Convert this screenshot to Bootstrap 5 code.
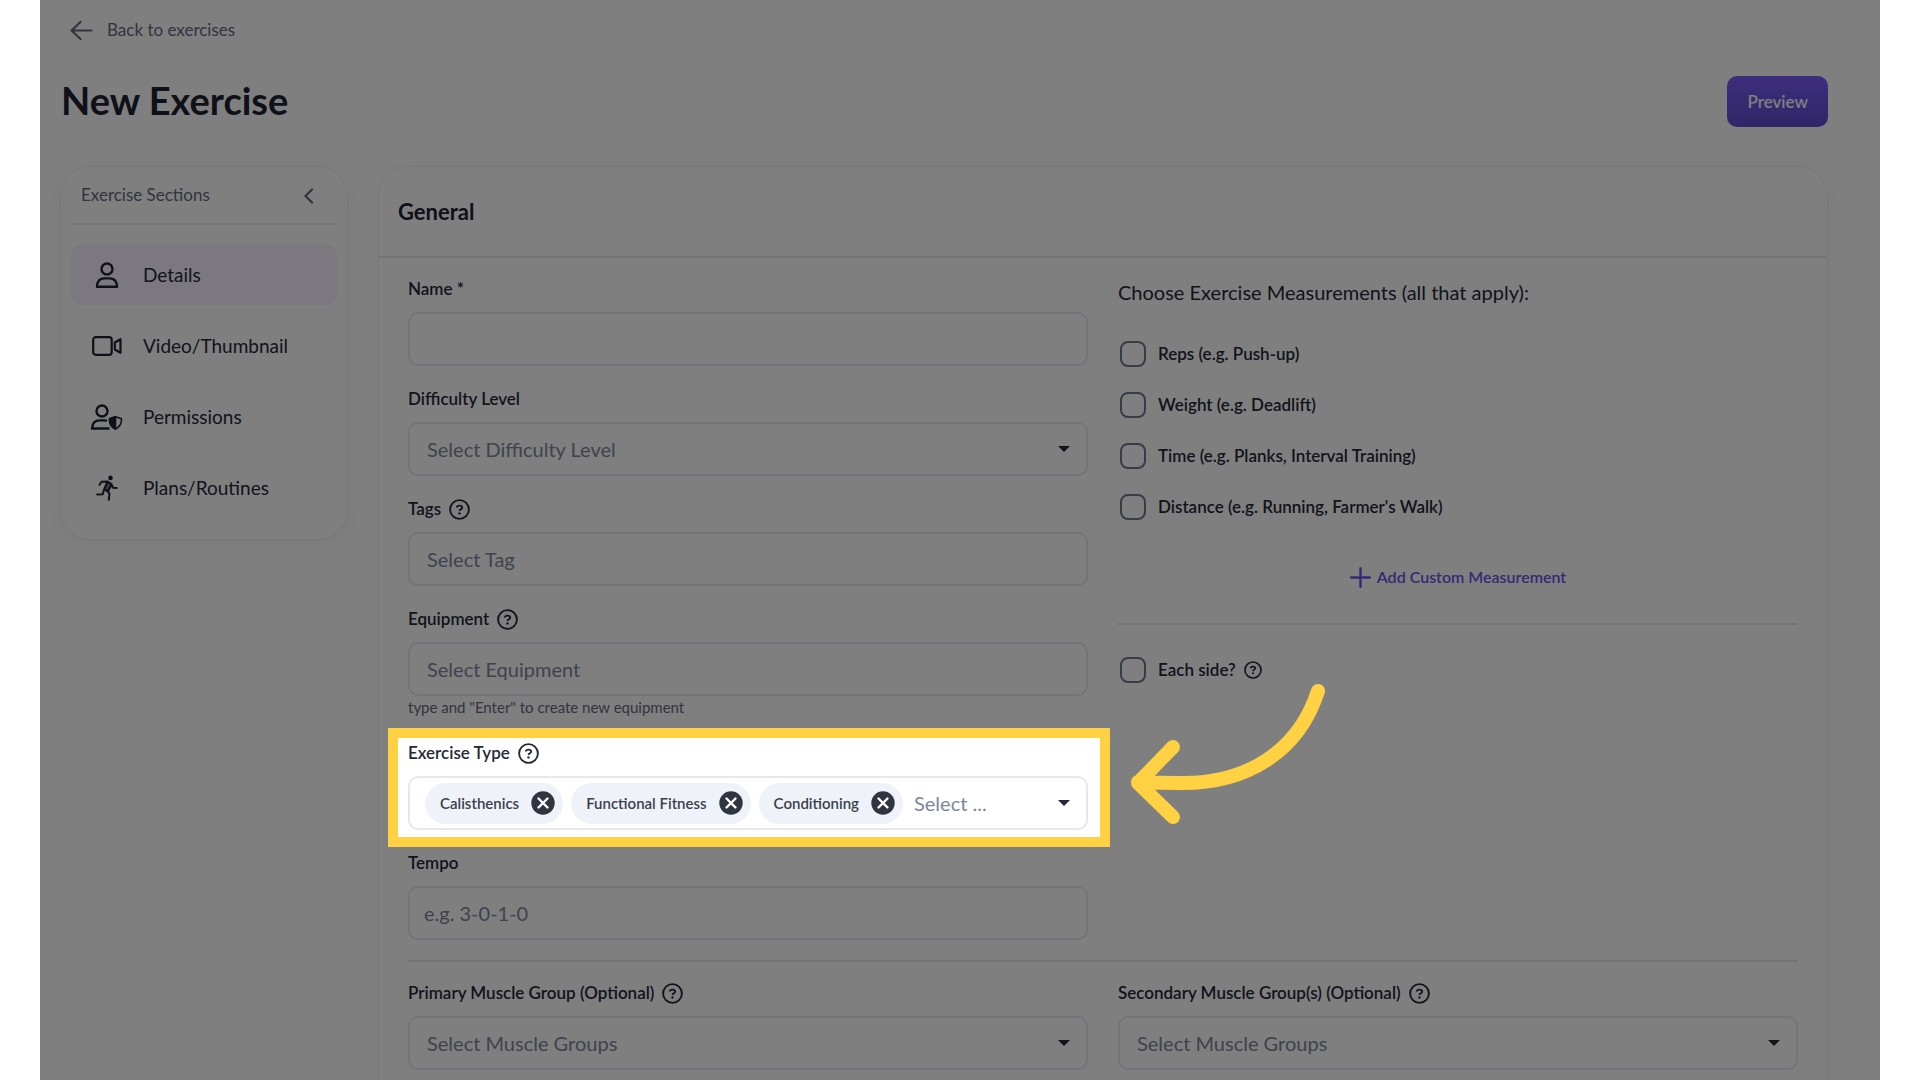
<!DOCTYPE html>
<html lang="en">
<head>
<meta charset="utf-8">
<meta name="viewport" content="width=device-width, initial-scale=1">
<title>New Exercise</title>
<link href="https://cdn.jsdelivr.net/npm/bootstrap@5.3.0/dist/css/bootstrap.min.css" rel="stylesheet">
<style>
  :root {
    --ink: #242938;
    --ink-strong: #1e2233;
    --muted: #626a7d;
    --placeholder: #7c869b;
    --line: #e6e8ee;
    --accent: #6c52e8;
    --spot: #ffd143;
  }
  body { font-family: Lato, "Liberation Sans", sans-serif; color: var(--ink); background: #fff; font-size: 20px; line-height: 24px; }
  .app-shell { position: relative; height: 100vh; overflow: hidden; margin: 0 40px; padding: 18px 52px 0 20px; }
  .back-link { color: var(--muted); font-size: 17px; gap: 14px; margin-left: 10px; }
  .title-bar { margin-top: 34px; height: 51px; }
  .page-title { font-size: 38px; line-height: 46px; font-weight: 700; color: var(--ink-strong); padding: 0 0 4px 1px; }
  .preview-btn { height: 51px; padding: 0 20px; border: 0; border-radius: 10px; color: #fff; font-size: 17px; font-weight: 600; background: linear-gradient(#785cfb, #624cd0); }
  .preview-btn:hover { color: #fff; background: #624cd0; }
  .board { margin-top: 39px; gap: 30px; }
  .panel { background: #fff; border: 1px solid #eeeff3; border-radius: 30px; box-shadow: 0 4px 24px rgba(40, 40, 60, .04); }

  .side-panel { flex: 0 0 288px; padding: 0 10px 21px; }
  .side-head { height: 58px; padding: 0 15px 0 10px; border-bottom: 2px solid var(--line); color: var(--muted); font-size: 17px; margin-bottom: 20px; }
  .side-list { gap: 11px; }
  .side-list .nav-link { height: 60px; padding: 0 0 0 12px; border-radius: 10px; color: var(--ink); gap: 13px; font-size: 19px; }
  .side-list .nav-link.active { background: #f6f2ff; }
  .side-list .ico-slot { width: 47px; flex: none; }

  .main-head { height: 91px; padding: 0 19px; border-bottom: 2px solid var(--line); }
  .main-head h2 { font-size: 22px; line-height: 28px; font-weight: 700; color: var(--ink-strong); }
  .main-body { padding: 20px 29px 60px; }
  .main-body .row { --bs-gutter-x: 30px; }

  .field { position: relative; margin-bottom: 22px; }
  .field-label { font-size: 17px; line-height: 22px; font-weight: 600; margin-bottom: 12px; gap: 8px; }
  .box { height: 54px; padding: 0 17px; border: 2px solid var(--line); border-radius: 10px; font-size: 20px; color: var(--placeholder); background-color: #fff; }
  .box.narrow-pad { padding: 0 14px; }
  .box::placeholder { color: var(--placeholder); opacity: 1; }
  .caret { background-image: url("data:image/svg+xml,%3Csvg xmlns='http://www.w3.org/2000/svg' viewBox='0 0 12 6'%3E%3Cpath d='M0 0h12L6 6z' fill='%23242938'/%3E%3C/svg%3E"); background-repeat: no-repeat; background-size: 12px 6px; background-position: right 16px center; }
  .hint { font-size: 15px; line-height: 22px; padding-bottom: 2px; color: var(--muted); }
  .rule { height: 2px; margin: 0; border: 0; background: var(--line); opacity: 1; }

  .chips { gap: 8px; padding: 0 0 0 15px; }
  .chip-item { height: 41px; padding: 0 8px 0 15px; gap: 12px; border-radius: 21px; background: #eff3f9; font-size: 15px; font-weight: 600; color: #3a3f4c; }
  .chip-x { padding: 0; border: 0; background: none; line-height: 0; }
  .chip-select { align-self: stretch; border: 0; padding: 0 0 0 3px; appearance: none; background-color: transparent; color: var(--placeholder); border-radius: 10px; }

  /* Tour step: frames one field and dims everything else in the shell */
  .spotlight { position: absolute; top: -14px; right: -22px; bottom: -17px; left: -20px; border: 10px solid var(--spot); box-shadow: 0 0 0 3000px rgba(0, 0, 0, .5); z-index: 10; pointer-events: none; }
  .spotlight svg { position: absolute; top: -56px; left: calc(100% + 30px); }

  .measure-title { font-size: 20px; line-height: 28px; font-weight: 400; margin-bottom: 35px; }
  .checks { gap: 25px; }
  .check-line { min-height: 26px; padding: 0 0 0 2px; margin: 0; gap: 12px; font-size: 17px; font-weight: 600; line-height: 26px; }
  .check-line .form-check-input { width: 26px; height: 26px; margin: 0; float: none; border: 2px solid #6d7a91; border-radius: 8px; flex: none; }
  .add-link { color: var(--accent); font-size: 16px; font-weight: 600; gap: 6px; margin: 45px 0 34px; }
  .each-side { margin-top: 32px; }
  .muscles-rule { margin-top: 20px; }
  .muscles { margin-top: 20px; }
  svg { flex: none; }
</style>
</head>
<body>
<svg class="d-none" aria-hidden="true">
  <symbol id="help" viewBox="0 0 21 21"><circle cx="10.500" cy="10.500" r="9.400" fill="none" stroke="currentColor" stroke-width="1.900"/><path d="M7.800 8.500Q8 6.600 10.500 6.600T13.200 8.600Q13.200 9.800 11.700 10.300Q10.600 10.700 10.600 12" fill="none" stroke="currentColor" stroke-width="1.900"/><circle cx="10.500" cy="14.400" r="1.200" fill="currentColor"/></symbol>
  <symbol id="close" viewBox="0 0 24 24"><circle cx="12" cy="12" r="11.700" fill="#30353f"/><path d="M7.500 7.500l9 9m0-9l-9 9" stroke="#fff" stroke-width="2.400" stroke-linecap="round"/></symbol>
</svg>

<div class="app-shell">
  <div class="d-flex">
    <a href="#" class="back-link d-flex align-items-center text-decoration-none">
      <svg width="23" height="20" viewBox="0 0 23 20" fill="none" stroke="currentColor" stroke-width="2.200" stroke-linecap="round" stroke-linejoin="round" aria-hidden="true"><path d="M21.500 10.500H1.500M10.500 2L1.500 10.500L10.500 19"/></svg>
      Back to exercises
    </a>
  </div>
  <div class="title-bar d-flex justify-content-between align-items-center">
    <h1 class="page-title m-0">New Exercise</h1>
    <button type="button" class="btn preview-btn">Preview</button>
  </div>

  <div class="board d-flex align-items-start">
    <aside class="panel side-panel">
      <div class="side-head d-flex justify-content-between align-items-center">
        <span>Exercise Sections</span>
        <button type="button" class="btn px-2 py-0 border-0 lh-1" aria-label="Collapse sections">
          <svg width="10" height="16" viewBox="0 0 10 16" fill="none" stroke="#626a7d" stroke-width="2.200" stroke-linecap="round" stroke-linejoin="round"><path d="M8 1.500L1.500 8L8 14.500"/></svg>
        </button>
      </div>
      <nav class="nav flex-column side-list">
        <a href="#" class="nav-link active d-flex align-items-center">
          <span class="ico-slot d-flex justify-content-center"><svg width="24" height="26" viewBox="0 0 24 26" fill="none" stroke="#1e2233" stroke-width="2.400" stroke-linejoin="round"><circle cx="12" cy="7" r="5.500"/><path d="M2 24.700Q2.300 16.400 9.500 16.400H14.500Q21.700 16.400 22 24.700Z"/></svg></span>
          Details
        </a>
        <a href="#" class="nav-link d-flex align-items-center">
          <span class="ico-slot d-flex justify-content-center"><svg width="30" height="20" viewBox="0 0 30 20" fill="none" stroke="#1e2233" stroke-width="2.200" stroke-linejoin="round"><rect x="1.200" y="1.200" width="18.500" height="17.600" rx="2.500"/><path d="M28.500 3.200V16.800L22.800 13.500V6.500Z"/></svg></span>
          Video/Thumbnail
        </a>
        <a href="#" class="nav-link d-flex align-items-center">
          <span class="ico-slot d-flex justify-content-center"><svg width="33" height="26" viewBox="0 0 33 26" fill="none" stroke="#1e2233" stroke-width="2.400" stroke-linejoin="round"><circle cx="12" cy="7" r="5.500"/><path d="M17 16.700Q15.500 16.400 14 16.400H9.500Q2.500 16.400 2 24.500H19.500"/><path d="M25.500 12.700L31.500 14.800Q31.900 22 25.500 25Q19.100 22 19.500 14.800Z" stroke-width="1.600"/><path d="M25.500 12.700L19.500 14.800Q19.100 22 25.500 25Z" fill="#1e2233" stroke-width="1.600"/></svg></span>
          Permissions
        </a>
        <a href="#" class="nav-link d-flex align-items-center">
          <span class="ico-slot d-flex justify-content-center"><svg width="22" height="26" viewBox="0 0 22 26" fill="none" stroke="#1e2233" stroke-width="2" stroke-linecap="round" stroke-linejoin="round"><circle cx="14.500" cy="2.900" r="2.300" fill="#1e2233" stroke="none"/><path d="M3.500 9.800L5.500 6.800L11.500 6.600L15.500 9.200L17 12.800L20.800 13M11.500 6.600L8.500 13.500L13.500 18.500L12.800 24.800M15.500 9.200L12.500 15.500M8.200 14L6.700 19.200L1.200 19.400"/><path d="M11.500 7L15.500 9.500L12.500 16L9 14Z" fill="#1e2233" fill-opacity=".6" stroke="none"/></svg></span>
          Plans/Routines
        </a>
      </nav>
    </aside>

    <main class="panel flex-grow-1">
      <header class="main-head d-flex align-items-center"><h2 class="m-0">General</h2></header>
      <form class="main-body">
        <div class="row">
          <div class="col-6">
            <div class="field">
              <label class="field-label d-flex align-items-center" for="name">Name *</label>
              <input id="name" type="text" class="form-control box">
            </div>
            <div class="field">
              <label class="field-label d-flex align-items-center" for="level">Difficulty Level</label>
              <select id="level" class="form-select box caret"><option>Select Difficulty Level</option></select>
            </div>
            <div class="field">
              <label class="field-label d-flex align-items-center" for="tags">Tags <svg width="21" height="21"><use href="#help"/></svg></label>
              <input id="tags" type="text" class="form-control box" placeholder="Select Tag">
            </div>
            <div class="field">
              <label class="field-label d-flex align-items-center" for="equipment">Equipment <svg width="21" height="21"><use href="#help"/></svg></label>
              <input id="equipment" type="text" class="form-control box" placeholder="Select Equipment">
              <div class="hint">type and "Enter" to create new equipment</div>
            </div>
            <div class="field">
              <label class="field-label d-flex align-items-center" for="type">Exercise Type <svg width="21" height="21"><use href="#help"/></svg></label>
              <div class="box chips d-flex align-items-center">
                <span class="chip-item d-flex align-items-center">Calisthenics <button type="button" class="chip-x" aria-label="Remove Calisthenics"><svg width="24" height="24"><use href="#close"/></svg></button></span>
                <span class="chip-item d-flex align-items-center">Functional Fitness <button type="button" class="chip-x" aria-label="Remove Functional Fitness"><svg width="24" height="24"><use href="#close"/></svg></button></span>
                <span class="chip-item d-flex align-items-center">Conditioning <button type="button" class="chip-x" aria-label="Remove Conditioning"><svg width="24" height="24"><use href="#close"/></svg></button></span>
                <select id="type" class="chip-select caret flex-grow-1"><option>Select ...</option></select>
              </div>
              <div class="spotlight">
                <svg width="198" height="144" viewBox="1130 682 198 144" fill="none" stroke="#ffd143" stroke-width="14" stroke-linecap="round" stroke-linejoin="round" aria-hidden="true"><path d="M1318 691C1298 753 1245 784 1180 783Q1160 783 1138 782M1173 747L1138 783L1173 817"/></svg>
              </div>
            </div>
            <div class="field mb-0">
              <label class="field-label d-flex align-items-center" for="tempo">Tempo</label>
              <input id="tempo" type="text" class="form-control box narrow-pad" placeholder="e.g. 3-0-1-0">
            </div>
          </div>

          <div class="col-6">
            <h3 class="measure-title">Choose Exercise Measurements (all that apply):</h3>
            <div class="checks d-flex flex-column">
              <div class="check-line d-flex align-items-center"><input class="form-check-input" type="checkbox" id="reps"><label for="reps">Reps (e.g. Push-up)</label></div>
              <div class="check-line d-flex align-items-center"><input class="form-check-input" type="checkbox" id="weight"><label for="weight">Weight (e.g. Deadlift)</label></div>
              <div class="check-line d-flex align-items-center"><input class="form-check-input" type="checkbox" id="time"><label for="time">Time (e.g. Planks, Interval Training)</label></div>
              <div class="check-line d-flex align-items-center"><input class="form-check-input" type="checkbox" id="distance"><label for="distance">Distance (e.g. Running, Farmer's Walk)</label></div>
            </div>
            <div class="d-flex justify-content-center">
              <a href="#" class="add-link d-flex align-items-center text-decoration-none"><svg width="21" height="21" viewBox="0 0 21 21" stroke="currentColor" stroke-width="2.400" stroke-linecap="round"><path d="M1.200 10.500H19.800M10.500 1.200V19.800"/></svg>Add Custom Measurement</a>
            </div>
            <hr class="rule">
            <div class="each-side check-line d-flex align-items-center"><input class="form-check-input" type="checkbox" id="each"><label class="d-flex align-items-center gap-2" for="each">Each side? <svg width="18" height="18"><use href="#help"/></svg></label></div>
          </div>
        </div>

        <hr class="rule muscles-rule">
        <div class="row muscles">
          <div class="col-6">
            <label class="field-label d-flex align-items-center" for="primary">Primary Muscle Group (Optional) <svg width="21" height="21"><use href="#help"/></svg></label>
            <select id="primary" class="form-select box caret"><option>Select Muscle Groups</option></select>
          </div>
          <div class="col-6">
            <label class="field-label d-flex align-items-center" for="secondary">Secondary Muscle Group(s) (Optional) <svg width="21" height="21"><use href="#help"/></svg></label>
            <select id="secondary" class="form-select box caret"><option>Select Muscle Groups</option></select>
          </div>
        </div>
      </form>
    </main>
  </div>
</div>
<script src="https://cdn.jsdelivr.net/npm/bootstrap@5.3.0/dist/js/bootstrap.bundle.min.js"></script>
</body>
</html>
